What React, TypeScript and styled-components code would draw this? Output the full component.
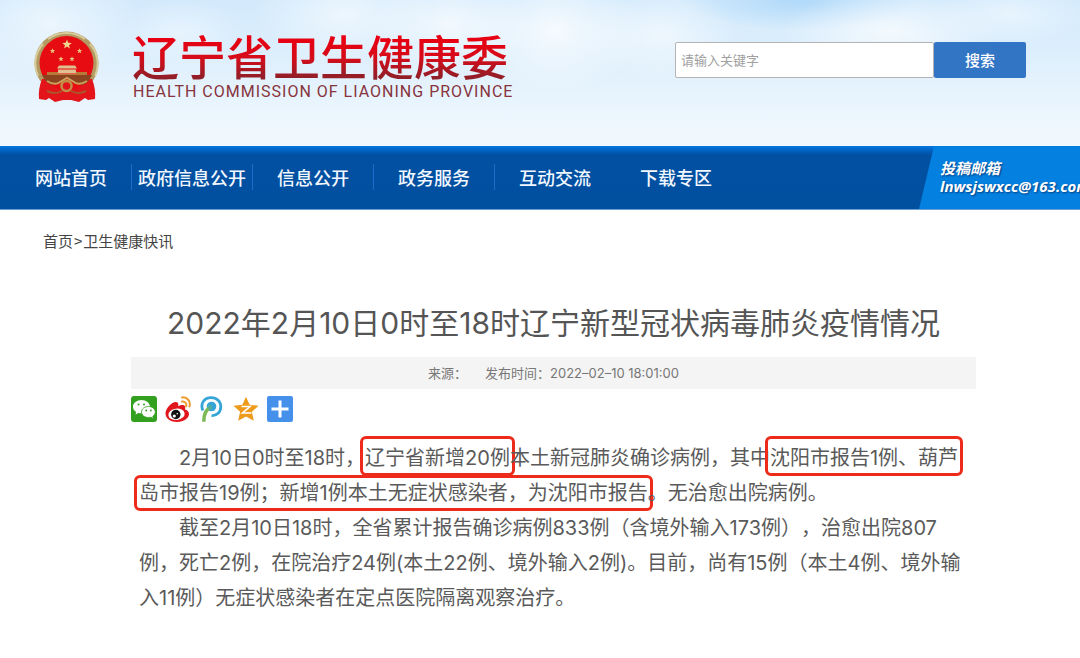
import React from "react";
import styled, { createGlobalStyle } from "styled-components";

const sans = `Inter, "Noto Sans CJK SC", sans-serif`;
const cjk = `"Noto Sans CJK SC", sans-serif`;

const GlobalStyle = createGlobalStyle`
  *, *::before, *::after { box-sizing: border-box; }
  body { margin: 0; background: #fff; font-family: ${sans}; overflow-x: hidden; }
  h1, p { margin: 0; }
  a { color: inherit; text-decoration: none; }
`;

const Header = styled.header`
  display: flex;
  align-items: flex-start;
  justify-content: space-between;
  height: 146px;
  padding: 30px 54px 0 34px;
  background:
    radial-gradient(ellipse 90px 60px at 50px 22px, #ffffff80, #fff0),
    radial-gradient(ellipse 60px 32px at 180px 32px, #ffffff60, #fff0),
    radial-gradient(ellipse 90px 50px at 345px 14px, #ffffff90, #fff0),
    radial-gradient(ellipse 80px 50px at 450px 24px, #ffffffb0, #fff0),
    radial-gradient(ellipse 90px 60px at 555px 30px, #ffffffc0, #fff0),
    radial-gradient(ellipse 80px 46px at 660px 34px, #ffffff90, #fff0),
    radial-gradient(ellipse 110px 40px at 890px 32px, #ffffffb0, #fff0),
    radial-gradient(ellipse 80px 30px at 1010px 14px, #ffffff70, #fff0),
    radial-gradient(ellipse 120px 30px at 800px 0, #b0d9f9, #b0d9f900),
    linear-gradient(#d3eafc 0, #dceefc 50px, #e6f3fd 90px, #f2f9fe 146px);
`;

const Brand = styled.a`
  display: flex;
  gap: 32px;
`;

const BrandText = styled.span`
  display: flex;
  flex-direction: column;
  gap: 3px;
`;

const BrandName = styled.span`
  font: 500 47px/50px ${cjk};
  background: linear-gradient(#e60012 10px, #d60c1a 28px, #8f1f28 48px);
  background-clip: text;
  color: transparent;
`;

const BrandLatin = styled.span`
  padding-left: 1px;
  font: 400 16px/18px Roboto, sans-serif;
  letter-spacing: 1px;
  color: #87343c;
  white-space: nowrap;
`;

const Search = styled.form`
  display: flex;
  margin-top: 12px;
`;

const SearchBox = styled.input`
  width: 259px;
  height: 36px;
  padding: 0 5px 2px;
  border: 1px solid #b4b4b4;
  border-radius: 2px;
  background: #fff;
  font: 13px ${cjk};
  &::placeholder { color: #a0a0a0; }
`;

const SearchButton = styled.button`
  width: 92px;
  height: 36px;
  padding: 0 0 2px;
  border: 0;
  border-radius: 2px;
  background: #3275c5;
  color: #fff;
  font: 500 15px ${cjk};
`;

const NavBar = styled.nav`
  display: flex;
  height: 64px;
  padding-left: 11px;
  border-bottom: 1px solid #6aa0d6;
  background: linear-gradient(#0a7be0 0, #0068cc 3px, #0150a2 9px, #014f9f 100%);
`;

const NavList = styled.ul`
  display: flex;
  align-items: center;
  margin: 0;
  padding: 0 0 2px;
  list-style: none;
`;

const NavItem = styled.li`
  width: 121px;
  border-right: 1px solid #1f6bcb;
  font: 500 18px/26px ${cjk};
  color: #f1f7ff;
  text-align: center;
  white-space: nowrap;
  &:nth-last-child(-n + 2) { border-color: transparent; }
`;

const Mail = styled.a`
  display: flex;
  flex-direction: column;
  flex: 0 0 161px;
  margin-left: auto;
  padding: 13px 0 0 21px;
  overflow: hidden;
  background: #0481e0;
  clip-path: polygon(15px 0, 100% 0, 100% 100%, 0 100%);
  color: #fff;
  font: italic 700 15px/18px "Open Sans", "Noto Sans CJK SC", sans-serif;
  text-shadow: 1px 1px 2px #003c80;
  white-space: nowrap;
`;

const Crumbs = styled.nav`
  display: flex;
  gap: 1px;
  padding: 19px 43px 0;
  font: 15px/24px ${cjk};
  color: #444;
`;

const Article = styled.article`
  margin: 48px 104px 40px 131px;
  color: #5a5a5a;
`;

const Title = styled.h1`
  font: 400 30px/44px ${sans};
  color: #555;
  text-align: center;
  white-space: nowrap;
`;

const Meta = styled.div`
  display: flex;
  justify-content: center;
  gap: 18px;
  margin-top: 12px;
  background: #f4f4f4;
  font: 13px/32px ${sans};
  color: #777;
`;

const Share = styled.div`
  display: flex;
  gap: 8px;
  margin-top: 7px;
`;

const ShareButton = styled.button`
  display: block;
  width: 26px;
  height: 26px;
  padding: 0;
  border: 0;
  background: none;
  svg { display: block; }
`;

const Body = styled.div`
  padding: 19px 12px 0 8px;
`;

const Paragraph = styled.p`
  font: 20px/35px ${sans};
  text-indent: 40px;
  text-spacing-trim: space-all;
`;

const Marked = styled.mark<{ $tall?: boolean }>`
  margin: 0 -5px;
  padding: ${(p) => (p.$tall ? "7px" : "3px")} 2px 3px;
  border: 3px solid #ee2a1a;
  border-radius: 6px;
  background: none;
  color: inherit;
`;

const navItems = ["网站首页", "政府信息公开", "信息公开", "政务服务", "互动交流", "下载专区"];

const star = (cx: number, cy: number, r: number) =>
  Array.from({ length: 10 }, (_, i) => {
    const a = (Math.PI * i) / 5 - Math.PI / 2;
    const d = i % 2 ? r * 0.42 : r;
    return `${cx + d * Math.cos(a)},${cy + d * Math.sin(a)}`;
  }).join(" ");

function Emblem() {
  return (
    <svg width="66" height="72" viewBox="0 0 66 72" aria-hidden="true">
      <ellipse cx="32.500" cy="33" rx="32" ry="31.500" fill="#b39a62" />
      <path d="M4 46A31 30 0 0 1 9 14M14 9A31 30 0 0 1 51 9M56 14A31 30 0 0 1 61 46" fill="none" stroke="#d9cc9c" strokeWidth="2" />
      <path d="M8 49Q4 59 5 69l7 1 3-2 6 4 8-2h8l8 2 6-4 3 2 7-1q1-10-3-20z" fill="#e3141a" />
      <circle cx="32.500" cy="33" r="27" fill="#e60c12" />
      <polygon points={star(33, 14.5, 5)} fill="#f0d890" />
      <polygon points={star(18.500, 21, 2.8)} fill="#e8c880" />
      <polygon points={star(45.500, 21, 2.8)} fill="#e8c880" />
      <polygon points={star(27, 29, 2.8)} fill="#e8c880" />
      <polygon points={star(38, 29, 2.8)} fill="#e8c880" />
      <path d="M25 35.500h16l2 3H23zM24 39.500h18v4H24z" fill="#e0c090" />
      <path d="M13 42h11v2h18v-2h11v3H13z" fill="#b87838" />
      <path d="M8 45h50q-3 7-9 10l-9-3-7-4-7 4-9 3q-6-3-9-10z" fill="#8a4420" />
      <path d="M13 51q8 5 13 1l7-4 7 4q5 4 13-1" fill="none" stroke="#c9a25c" strokeWidth="2" />
      <circle cx="32.500" cy="56" r="5" fill="#e0141a" stroke="#c09048" strokeWidth="2.500" />
      <path d="M13 61q8 4 15 0M37 61q7 4 15 0" fill="none" stroke="#a8582c" strokeWidth="2" />
    </svg>
  );
}

const WeChat = () => (
  <svg width="26" height="26" viewBox="0 0 26 26">
    <rect width="26" height="26" rx="3" fill="#33a01f" />
    <path d="M10.500 4C5.800 4 2 7 2 10.700c0 2.100 1.200 4 3.200 5.200L4.500 18.500l3-1.600c1 .3 2 .4 3 .4 4.700 0 8.500-3 8.500-6.600S15.200 4 10.500 4z" fill="#fff" />
    <path d="M17.500 10.500c-4 0-7 2.500-7 5.500s3 5.500 7 5.500c.8 0 1.600-.1 2.400-.3l2.500 1.300-.6-2.200c1.500-1 2.500-2.600 2.500-4.300 0-3-3-5.500-6.800-5.500z" fill="#fff" stroke="#33a01f" strokeWidth=".8" />
    <g fill="#33a01f"><circle cx="7.500" cy="8.500" r="1" /><circle cx="13" cy="8.500" r="1" /><circle cx="15.200" cy="14.500" r=".9" /><circle cx="19.800" cy="14.500" r=".9" /></g>
  </svg>
);

const Weibo = () => (
  <svg width="26" height="26" viewBox="0 0 26 26">
    <path d="M10.500 6C7 6 .5 12 .5 17.500.500 22.500 6 26 12 26c7 0 12-4 12-8 0-2.500-2-4-4-4.500.8-2.500 0-4.500-2.500-4.500-1.500 0-3 .6-4.300 1.200C13.800 7.500 13 6 10.500 6z" fill="#e0161c" />
    <ellipse cx="11.500" cy="18.300" rx="8.200" ry="5.700" fill="#fff" transform="rotate(-8 11.500 18.300)" />
    <circle cx="10.800" cy="18.500" r="4.700" fill="#111" />
    <circle cx="9.300" cy="20" r="1.600" fill="#fff" /><circle cx="12.300" cy="17.700" r=".8" fill="#fff" />
    <path d="M17 1.500c5-1 9 4 7.500 9M17 5.500c3-.5 5 2 4.200 4.800" fill="none" stroke="#ee9a2e" strokeWidth="2" strokeLinecap="round" />
  </svg>
);

const Pengyou = () => (
  <svg width="26" height="26" viewBox="-1 0 26 26">
    <path d="M3 14.500C-.5 7 5 1.600 11 1.600c6 0 9.800 4 9.800 9.200s-4 9-9.300 9" fill="none" stroke="#35a5d8" strokeWidth="2.800" />
    <circle cx="11.500" cy="10.500" r="4.800" fill="#35a5d8" />
    <path d="M11 10.500C6 13.500 3.500 18 3.800 25.800" fill="none" stroke="#7db857" strokeWidth="3.400" />
    <path d="M11.500 10L8.500 12.500" stroke="#4fae9e" strokeWidth="3" />
  </svg>
);

const Qzone = () => (
  <svg width="26" height="26" viewBox="0 0 26 26">
    <path d="M13 .8l3.600 8 8.900 1-6.600 6 1.900 8.900L13 20.400l-7.800 4.300 1.900-8.900-6.600-6 8.900-1z" fill="#ee9a1c" />
    <path d="M8.500 10.500h8.500l-7.500 6.500h9" fill="none" stroke="#fff" strokeWidth="1.600" />
  </svg>
);

const More = () => (
  <svg width="26" height="26" viewBox="0 0 26 26">
    <rect width="26" height="26" rx="2" fill="#4590ea" />
    <path d="M13 4.500v17M4.500 13h17" stroke="#fff" strokeWidth="3" />
  </svg>
);

const shares = [
  { label: "微信", icon: <WeChat /> },
  { label: "新浪微博", icon: <Weibo /> },
  { label: "朋友网", icon: <Pengyou /> },
  { label: "QQ空间", icon: <Qzone /> },
  { label: "更多", icon: <More /> },
];

export default function App() {
  return (
    <>
      <GlobalStyle />
      <Header>
        <Brand href="#">
          <Emblem />
          <BrandText>
            <BrandName>辽宁省卫生健康委</BrandName>
            <BrandLatin>HEALTH COMMISSION OF LIAONING PROVINCE</BrandLatin>
          </BrandText>
        </Brand>
        <Search>
          <SearchBox type="search" placeholder="请输入关键字" aria-label="请输入关键字" />
          <SearchButton type="button">搜索</SearchButton>
        </Search>
      </Header>
      <NavBar>
        <NavList>
          {navItems.map((item) => (
            <NavItem key={item}><a href="#">{item}</a></NavItem>
          ))}
        </NavList>
        <Mail href="mailto:lnwsjswxcc@163.com">
          <span>投稿邮箱</span>
          <span>lnwsjswxcc@163.com</span>
        </Mail>
      </NavBar>
      <Crumbs>
        <a href="#">首页</a>
        <span>&gt;</span>
        <a href="#">卫生健康快讯</a>
      </Crumbs>
      <Article>
        <Title>2022年2月10日0时至18时辽宁新型冠状病毒肺炎疫情情况</Title>
        <Meta>
          <span>来源：</span>
          <span>发布时间：2022–02–10 18:01:00</span>
        </Meta>
        <Share>
          {shares.map((s) => (
            <ShareButton key={s.label} type="button" aria-label={s.label}>{s.icon}</ShareButton>
          ))}
        </Share>
        <Body>
          <Paragraph>
            2月10日0时至18时，<Marked $tall>辽宁省新增20例</Marked>本土新冠肺炎确诊病例，其中<Marked $tall>沈阳市报告1例、葫芦</Marked>
            <Marked>岛市报告19例；新增1例本土无症状感染者，为沈阳市报告</Marked>。无治愈出院病例。
          </Paragraph>
          <Paragraph>
            截至2月10日18时，全省累计报告确诊病例833例（含境外输入173例），治愈出院807例，死亡2例，在院治疗24例(本土22例、境外输入2例)。目前，尚有15例（本土4例、境外输入11例）无症状感染者在定点医院隔离观察治疗。
          </Paragraph>
        </Body>
      </Article>
    </>
  );
}
